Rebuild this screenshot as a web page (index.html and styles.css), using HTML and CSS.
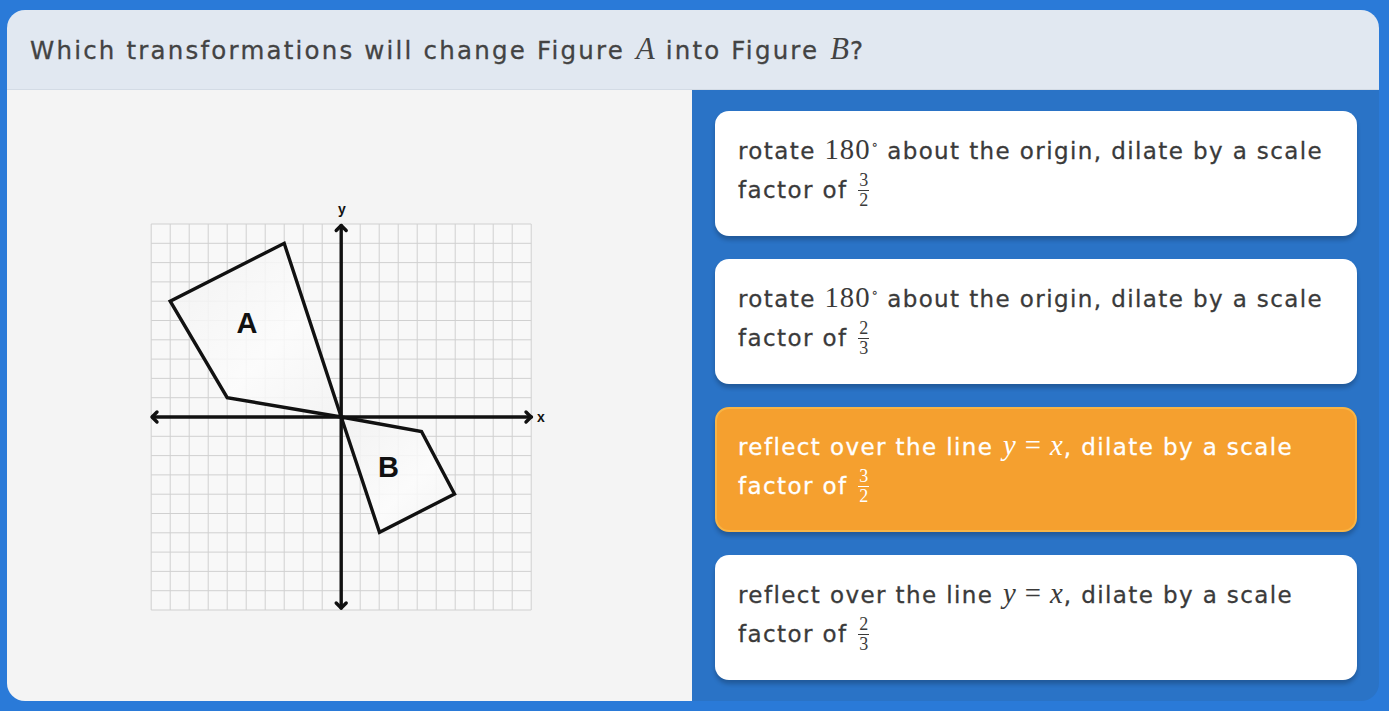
FILE: index.html
```html
<!DOCTYPE html>
<html lang="en">
<head>
<meta charset="utf-8">
<title>Question</title>
<link rel="stylesheet" href="styles.css">
</head>
<body>
<div class="card">
  <div class="header">
    <h1 class="question">Which transformations will change Figure <span class="math">A</span> into Figure <span class="math">B</span>?</h1>
  </div>
  <div class="body">
    <div class="figure-panel">
      <svg class="graph" width="420" height="440" viewBox="139.5 175.5 420 440" xmlns="http://www.w3.org/2000/svg">
        <defs>
          <linearGradient id="shade" x1="0" y1="0" x2="1" y2="1">
            <stop offset="0" stop-color="#f1f1f1"/>
            <stop offset="0.6" stop-color="#fcfcfc"/>
            <stop offset="1" stop-color="#f3f3f3"/>
          </linearGradient>
        </defs>
        <rect x="150.7" y="223.5" width="380" height="386" fill="#f8f8f8"/>
        <g stroke="#d0d0d0" stroke-width="1">
          <line x1="150.7" y1="223.5" x2="150.7" y2="609.5"/>
          <line x1="169.7" y1="223.5" x2="169.7" y2="609.5"/>
          <line x1="188.7" y1="223.5" x2="188.7" y2="609.5"/>
          <line x1="207.7" y1="223.5" x2="207.7" y2="609.5"/>
          <line x1="226.7" y1="223.5" x2="226.7" y2="609.5"/>
          <line x1="245.7" y1="223.5" x2="245.7" y2="609.5"/>
          <line x1="264.7" y1="223.5" x2="264.7" y2="609.5"/>
          <line x1="283.7" y1="223.5" x2="283.7" y2="609.5"/>
          <line x1="302.7" y1="223.5" x2="302.7" y2="609.5"/>
          <line x1="321.7" y1="223.5" x2="321.7" y2="609.5"/>
          <line x1="359.7" y1="223.5" x2="359.7" y2="609.5"/>
          <line x1="378.7" y1="223.5" x2="378.7" y2="609.5"/>
          <line x1="397.7" y1="223.5" x2="397.7" y2="609.5"/>
          <line x1="416.7" y1="223.5" x2="416.7" y2="609.5"/>
          <line x1="435.7" y1="223.5" x2="435.7" y2="609.5"/>
          <line x1="454.7" y1="223.5" x2="454.7" y2="609.5"/>
          <line x1="473.7" y1="223.5" x2="473.7" y2="609.5"/>
          <line x1="492.7" y1="223.5" x2="492.7" y2="609.5"/>
          <line x1="511.7" y1="223.5" x2="511.7" y2="609.5"/>
          <line x1="530.7" y1="223.5" x2="530.7" y2="609.5"/>
          <line x1="150.7" y1="223.5" x2="530.7" y2="223.5"/>
          <line x1="150.7" y1="242.8" x2="530.7" y2="242.8"/>
          <line x1="150.7" y1="262.1" x2="530.7" y2="262.1"/>
          <line x1="150.7" y1="281.4" x2="530.7" y2="281.4"/>
          <line x1="150.7" y1="300.7" x2="530.7" y2="300.7"/>
          <line x1="150.7" y1="320.0" x2="530.7" y2="320.0"/>
          <line x1="150.7" y1="339.3" x2="530.7" y2="339.3"/>
          <line x1="150.7" y1="358.6" x2="530.7" y2="358.6"/>
          <line x1="150.7" y1="377.9" x2="530.7" y2="377.9"/>
          <line x1="150.7" y1="397.2" x2="530.7" y2="397.2"/>
          <line x1="150.7" y1="435.8" x2="530.7" y2="435.8"/>
          <line x1="150.7" y1="455.1" x2="530.7" y2="455.1"/>
          <line x1="150.7" y1="474.4" x2="530.7" y2="474.4"/>
          <line x1="150.7" y1="493.7" x2="530.7" y2="493.7"/>
          <line x1="150.7" y1="513.0" x2="530.7" y2="513.0"/>
          <line x1="150.7" y1="532.3" x2="530.7" y2="532.3"/>
          <line x1="150.7" y1="551.6" x2="530.7" y2="551.6"/>
          <line x1="150.7" y1="570.9" x2="530.7" y2="570.9"/>
          <line x1="150.7" y1="590.2" x2="530.7" y2="590.2"/>
          <line x1="150.7" y1="609.5" x2="530.7" y2="609.5"/>
        </g>
        <polygon points="340.7,416.5 283.7,242.8 169.7,300.7 226.7,397.2" fill="url(#shade)" fill-opacity="0.85" stroke="#111" stroke-width="3.4" stroke-linejoin="miter"/>
        <polygon points="340.7,416.5 421,431 454,493.5 379,531.8" fill="url(#shade)" fill-opacity="0.85" stroke="#111" stroke-width="3.4" stroke-linejoin="miter"/>
        <g stroke="#111" stroke-width="3.4" fill="none" stroke-linecap="round" stroke-linejoin="round">
          <line x1="152" y1="416.5" x2="531" y2="416.5"/>
          <line x1="340.7" y1="225" x2="340.7" y2="607.5"/>
          <polyline points="156.5,411.5 151.5,416.5 156.5,421.5"/>
          <polyline points="525.5,411.5 530.5,416.5 525.5,421.5"/>
          <polyline points="335.7,230 340.7,225 345.7,230"/>
          <polyline points="335.7,602.5 340.7,607.5 345.7,602.5"/>
        </g>
        <text x="341.5" y="213" class="axis-label">y</text>
        <text x="540.5" y="421" class="axis-label">x</text>
        <text x="246.5" y="332" class="fig-label">A</text>
        <text x="388" y="476" class="fig-label">B</text>
      </svg>
    </div>
    <div class="options">
      <div class="option">
        <p class="option-text">rotate <span class="num">180</span><sup class="deg">∘</sup> about the origin, dilate by a scale factor of <span class="frac"><span class="frac-num">3</span><span class="frac-den">2</span></span></p>
      </div>
      <div class="option">
        <p class="option-text">rotate <span class="num">180</span><sup class="deg">∘</sup> about the origin, dilate by a scale factor of <span class="frac"><span class="frac-num">2</span><span class="frac-den">3</span></span></p>
      </div>
      <div class="option option-selected">
        <p class="option-text">reflect over the line <span class="math">y</span><span class="rel">=</span><span class="math">x</span>, dilate by a scale factor of <span class="frac"><span class="frac-num">3</span><span class="frac-den">2</span></span></p>
      </div>
      <div class="option">
        <p class="option-text">reflect over the line <span class="math">y</span><span class="rel">=</span><span class="math">x</span>, dilate by a scale factor of <span class="frac"><span class="frac-num">2</span><span class="frac-den">3</span></span></p>
      </div>
    </div>
  </div>
</div>
</body>
</html>
```
FILE: styles.css
```css
* { box-sizing: border-box; }

html, body {
  margin: 0;
  padding: 0;
}

body {
  background: #2a7ad8;
  font-family: "DejaVu Sans", "Liberation Sans", sans-serif;
  width: 1389px;
  height: 711px;
  overflow: hidden;
}

.card {
  margin: 10px 0 0 7px;
  width: 1372px;
  height: 691px;
  border-radius: 18px;
  overflow: hidden;
  display: flex;
  flex-direction: column;
}

.header {
  height: 80px;
  flex: none;
  background: #e1e8f1;
  border-bottom: 1px solid #d3dbe5;
  display: flex;
  align-items: center;
  padding: 0 23px;
}

.question {
  margin: 0;
  font-size: 24.5px;
  font-weight: 400;
  color: #434343;
  letter-spacing: 2.2px;
  white-space: nowrap;
  -webkit-text-stroke: 0.3px #434343;
}

.math {
  font-family: "Liberation Serif", "DejaVu Serif", serif;
  font-style: italic;
  font-weight: 400;
  font-size: 1.25em;
  letter-spacing: 0;
  margin: 0 1px;
  -webkit-text-stroke: 0;
}

.num {
  font-family: "Liberation Serif", "DejaVu Serif", serif;
  font-weight: 400;
  font-size: 1.25em;
  letter-spacing: 1px;
  -webkit-text-stroke: 0;
}

.rel {
  font-family: "Liberation Serif", "DejaVu Serif", serif;
  font-weight: 400;
  font-size: 1.25em;
  letter-spacing: 0;
  margin: 0 8px;
  -webkit-text-stroke: 0;
}

.body {
  flex: 1;
  display: flex;
  min-height: 0;
}

.figure-panel {
  width: 685px;
  flex: none;
  background: #f4f4f4;
  display: flex;
  align-items: center;
  justify-content: center;
}

.graph {
  display: block;
}

.axis-label {
  font-family: "Liberation Sans", sans-serif;
  font-size: 14px;
  font-weight: 700;
  fill: #111;
  text-anchor: middle;
}

.fig-label {
  font-family: "Liberation Sans", sans-serif;
  font-size: 29px;
  font-weight: 700;
  fill: #111;
  text-anchor: middle;
}

.options {
  flex: 1;
  background: #2a73c6;
  padding: 21px 22px 22px 23px;
  display: flex;
  flex-direction: column;
  gap: 23px;
}

.option {
  height: 125px;
  flex: none;
  background: #ffffff;
  border-radius: 14px;
  box-shadow: 0 4px 4px rgba(0, 0, 0, 0.22);
  padding: 19px 23px 0 23px;
}

.option-selected {
  background: #f5a02f;
  border: 2px solid #f8b445;
  padding: 17px 21px 0 21px;
}

.option-text {
  margin: 0;
  font-size: 23px;
  font-weight: 400;
  line-height: 39px;
  color: #3a3a3a;
  letter-spacing: 1.4px;
  -webkit-text-stroke: 0.3px currentColor;
}

.option-selected .option-text {
  color: #ffffff;
}

.deg {
  font-family: "Liberation Serif", "DejaVu Serif", serif;
  font-size: 14px;
  font-weight: 400;
  vertical-align: 10px;
  line-height: 0;
  margin-left: 1px;
  letter-spacing: 0;
  -webkit-text-stroke: 0;
}

.frac {
  display: inline-flex;
  flex-direction: column;
  align-items: center;
  vertical-align: middle;
  font-family: "Liberation Serif", "DejaVu Serif", serif;
  font-weight: 400;
  font-size: 18px;
  line-height: 15px;
  letter-spacing: 0;
  margin-left: 2px;
  position: relative;
  top: -1px;
  -webkit-text-stroke: 0;
}

.frac-num {
  padding: 0 1px 2px;
  border-bottom: 1px solid currentColor;
}

.frac-den {
  padding-top: 2px;
}
```
